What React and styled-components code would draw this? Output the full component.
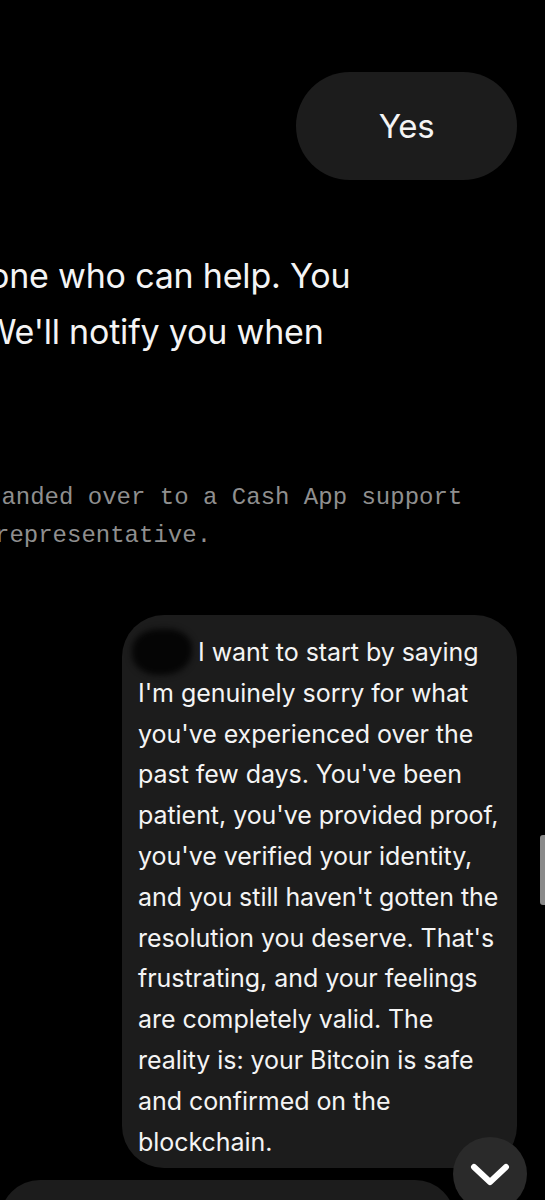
import React from 'react'
import styled, {createGlobalStyle} from 'styled-components'

const Global = createGlobalStyle`
    html, body {
        margin: 0;
        padding: 0;
        background: #000;
        overflow: hidden;
    }
    body {
        font-family: Inter, "Noto Sans", sans-serif;
        color: #f4f4f4;
    }
`

const Screen = styled.div`
    position: relative;
    width: 545px;
    height: 1200px;
    overflow: hidden;
    display: flex;
    flex-direction: column;
    padding-top: 72px;
    box-sizing: border-box;
    & > * {
        flex-shrink: 0;
    }
`

const YesBubble = styled.div`
    align-self: flex-end;
    margin-right: 28px;
    width: 221px;
    height: 108px;
    border-radius: 54px;
    background: #1c1c1c;
    display: flex;
    align-items: center;
    justify-content: center;
    font-size: 33px;
    letter-spacing: -0.3px;
`

const AgentText = styled.div`
    margin-top: 68px;
    font-size: 34px;
    line-height: 56px;
    letter-spacing: -0.2px;
`

const Line = styled.div`
    white-space: nowrap;
    margin-left: ${p => p.$shift}px;
`

const SystemNote = styled.div`
    margin-top: 119px;
    font-family: "Liberation Mono", "DejaVu Sans Mono", monospace;
    font-size: 24px;
    line-height: 38px;
    color: #8f8f8f;
`

const UserBubble = styled.div`
    align-self: flex-end;
    margin-top: 60px;
    margin-right: 28px;
    width: 395px;
    height: 553px;
    box-sizing: border-box;
    padding: 14px 0 0 16px;
    border-radius: 42px;
    background: #1c1c1c;
    font-size: 25px;
    line-height: 40.8px;
    letter-spacing: -0.05px;
`

const Redacted = styled.span`
    display: inline-block;
    width: 60px;
    height: 46px;
    margin: 0 6px -14px -6px;
    border-radius: 45% 40% 50% 45%;
    background: #050505;
    filter: blur(3px);
`

const NextBubble = styled.div`
    margin-top: 12px;
    width: 455px;
    height: 80px;
    border-radius: 40px 40px 0 0;
    background: #1c1c1c;
`

const ScrollDown = styled.div`
    position: absolute;
    left: 453px;
    top: 1137px;
    width: 74px;
    height: 74px;
    border-radius: 50%;
    background: #2a2a2a;
    display: flex;
    align-items: flex-start;
    justify-content: center;
    padding-top: 26px;
    box-sizing: border-box;
`

const ScrollThumb = styled.div`
    position: absolute;
    right: 0;
    top: 835px;
    width: 5px;
    height: 70px;
    border-radius: 3px 0 0 3px;
    background: #8a8a8a;
`

const bubbleLines = [
    "I'm genuinely sorry for what",
    "you've experienced over the",
    "past few days. You've been",
    "patient, you've provided proof,",
    "you've verified your identity,",
    "and you still haven't gotten the",
    "resolution you deserve. That's",
    "frustrating, and your feelings",
    "are completely valid. The",
    "reality is: your Bitcoin is safe",
    "and confirmed on the",
    "blockchain.",
]

export default function App() {
    return (
        <Screen>
            <Global />
            <YesBubble>Yes</YesBubble>
            <AgentText>
                <Line $shift={-11}>one who can help. You</Line>
                <Line $shift={-17}>We'll notify you when</Line>
            </AgentText>
            <SystemNote>
                <Line $shift={-13}>handed over to a Cash App support</Line>
                <Line $shift={-5}>representative.</Line>
            </SystemNote>
            <UserBubble>
                <Line $shift={0}><Redacted />I want to start by saying</Line>
                {bubbleLines.map((l) => (
                    <Line key={l} $shift={0}>{l}</Line>
                ))}
            </UserBubble>
            <NextBubble />
            <ScrollDown>
                <svg width="40" height="24" viewBox="0 0 40 24">
                    <path d="M4 4 L20 19 L36 4" fill="none" stroke="#fff" strokeWidth="6" strokeLinecap="round" strokeLinejoin="round" />
                </svg>
            </ScrollDown>
            <ScrollThumb />
        </Screen>
    )
}
